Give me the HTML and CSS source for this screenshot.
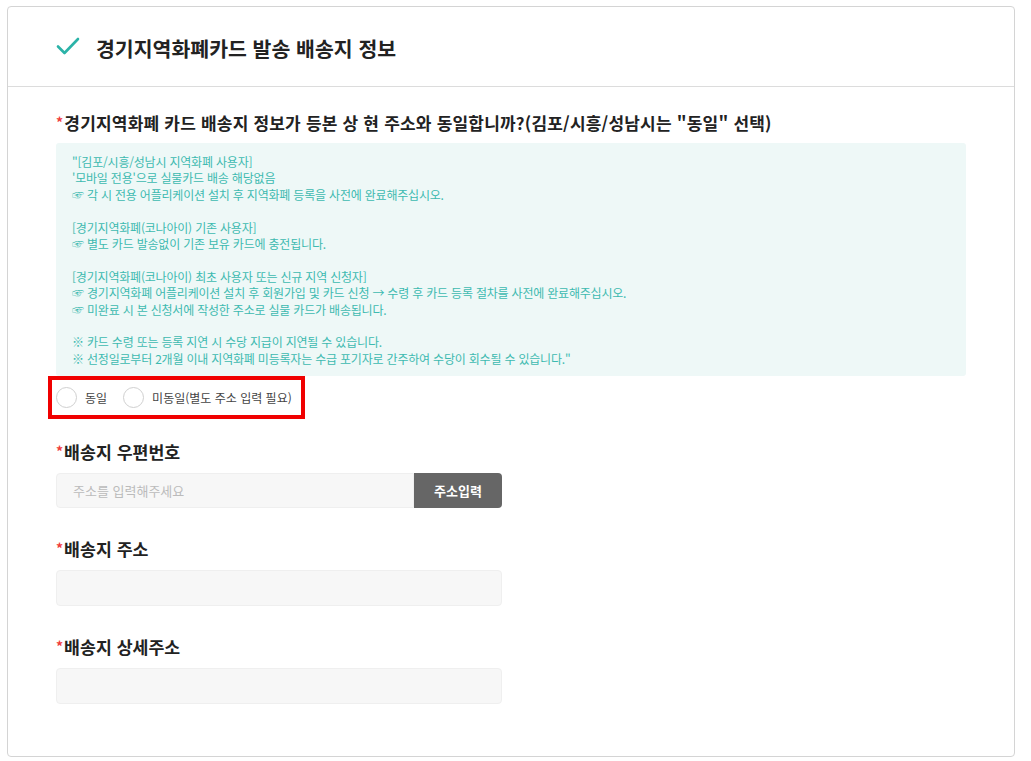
FILE: index.html
```html
<!DOCTYPE html>
<html lang="ko">
<head>
    <meta charset="UTF-8">
    <meta name="viewport" content="width=device-width, initial-scale=1.0">
    <title>경기지역화폐카드 발송 배송지 정보</title>
    <link rel="stylesheet" href="styles.css">
</head>
<body>

<div class="card">
    <div class="card-header">
        <svg class="check-icon" width="24" height="20" viewBox="0 0 24 20">
            <path d="M2 10.5 L8.5 17 L22 3" fill="none" stroke="#2bb3a8" stroke-width="2.6" stroke-linecap="round" stroke-linejoin="round"/>
        </svg>
        <h2>경기지역화폐카드 발송 배송지 정보</h2>
    </div>

    <div class="card-body">
        <div class="question"><span class="req">*</span>경기지역화폐 카드 배송지 정보가 등본 상 현 주소와 동일합니까?(김포/시흥/성남시는 "동일" 선택)</div>

        <div class="notice">
            <p>"[김포/시흥/성남시 지역화폐 사용자]</p>
            <p>'모바일 전용'으로 실물카드 배송 해당없음</p>
            <p>☞ 각 시 전용 어플리케이션 설치 후 지역화폐 등록을 사전에 완료해주십시오.</p>
            <p class="blank"></p>
            <p>[경기지역화폐(코나아이) 기존 사용자]</p>
            <p>☞ 별도 카드 발송없이 기존 보유 카드에 충전됩니다.</p>
            <p class="blank"></p>
            <p>[경기지역화폐(코나아이) 최초 사용자 또는 신규 지역 신청자]</p>
            <p>☞ 경기지역화폐 어플리케이션 설치 후 회원가입 및 카드 신청 → 수령 후 카드 등록 절차를 사전에 완료해주십시오.</p>
            <p>☞ 미완료 시 본 신청서에 작성한 주소로 실물 카드가 배송됩니다.</p>
            <p class="blank"></p>
            <p>※ 카드 수령 또는 등록 지연 시 수당 지급이 지연될 수 있습니다.</p>
            <p>※ 선정일로부터 2개월 이내 지역화폐 미등록자는 수급 포기자로 간주하여 수당이 회수될 수 있습니다."</p>
        </div>

        <div class="radio-group">
            <label class="radio"><input type="radio" name="same"><span>동일</span></label>
            <label class="radio"><input type="radio" name="same"><span>미동일(별도 주소 입력 필요)</span></label>
        </div>

        <div class="field">
            <div class="field-label"><span class="req">*</span>배송지 우편번호</div>
            <div class="input-row">
                <input type="text" class="text-input" placeholder="주소를 입력해주세요">
                <button class="addr-btn">주소입력</button>
            </div>
        </div>

        <div class="field">
            <div class="field-label"><span class="req">*</span>배송지 주소</div>
            <input type="text" class="text-input full">
        </div>

        <div class="field">
            <div class="field-label"><span class="req">*</span>배송지 상세주소</div>
            <input type="text" class="text-input full">
        </div>
    </div>
</div>

</body>
</html>
```

FILE: styles.css
```css
body {
    margin: 0;
    background-color: #fff;
    font-family: "Noto Sans CJK KR", "Noto Sans", sans-serif;
    color: #222;
}
.card {
    width: 1008px;
    height: 751px;
    margin: 6px 0 0 7px;
    box-sizing: border-box;
    border: 1px solid #d4d4d4;
    border-radius: 4px;
}
.card-header {
    display: flex;
    align-items: center;
    height: 80px;
    padding: 3px 0 0 48px;
    border-bottom: 1px solid #dcdcdc;
    box-sizing: border-box;
}
.check-icon {
    margin-right: 16px;
    margin-top: -4px;
}
.card-header h2 {
    margin: 0;
    font-size: 20.5px;
    font-weight: bold;
    color: #222;
}
.card-body {
    padding: 23px 48px 0 48px;
}
.req {
    color: #f03c3c;
    font-size: 14px;
    vertical-align: 2px;
    margin-right: 1px;
}
.question {
    font-size: 17px;
    font-weight: bold;
    line-height: 24px;
    letter-spacing: 0.2px;
    color: #222;
}
.notice {
    margin-top: 8px;
    padding: 11px 16px 9px 16px;
    background-color: #eef8f7;
    border-radius: 3px;
    color: #3dbab0;
    font-size: 12px;
    line-height: 16.4px;
    letter-spacing: -0.2px;
}
.notice p {
    margin: 0;
    white-space: nowrap;
}
.notice .blank {
    height: 16.4px;
}
.radio-group {
    display: inline-flex;
    align-items: center;
    margin-left: -8px;
    padding: 7px 9px 7px 4px;
    border: 4px solid #f00000;
}
.radio {
    display: flex;
    align-items: center;
    margin-right: 16px;
    font-size: 12px;
    color: #444;
}
.radio:last-child {
    margin-right: 0;
}
.radio input {
    appearance: none;
    -webkit-appearance: none;
    width: 21px;
    height: 21px;
    margin: 0 8px 0 0;
    border: 1px solid #d0d0d0;
    border-radius: 50%;
    background-color: #fff;
    box-sizing: border-box;
}
.field {
    margin-top: 20px;
}
.field + .field {
    margin-top: 28px;
}
.field-label {
    font-size: 17.3px;
    font-weight: bold;
    line-height: 24px;
    color: #222;
    margin-bottom: 9px;
}
.input-row {
    display: flex;
    width: 446px;
}
.text-input {
    display: block;
    height: 35px;
    box-sizing: border-box;
    border: 1px solid #efefef;
    border-radius: 4px;
    background-color: #f7f7f7;
    padding: 0 16px;
    font-family: inherit;
    font-size: 13px;
    color: #333;
    outline: none;
}
.text-input::placeholder {
    color: #bbb;
}
.input-row .text-input {
    flex: 1;
    border-radius: 4px 0 0 4px;
}
.text-input.full {
    width: 446px;
    height: 36px;
}
.addr-btn {
    width: 88px;
    height: 35px;
    border: none;
    border-radius: 0 4px 4px 0;
    background-color: #666;
    color: #fff;
    font-family: inherit;
    font-size: 13px;
    font-weight: bold;
}
```
